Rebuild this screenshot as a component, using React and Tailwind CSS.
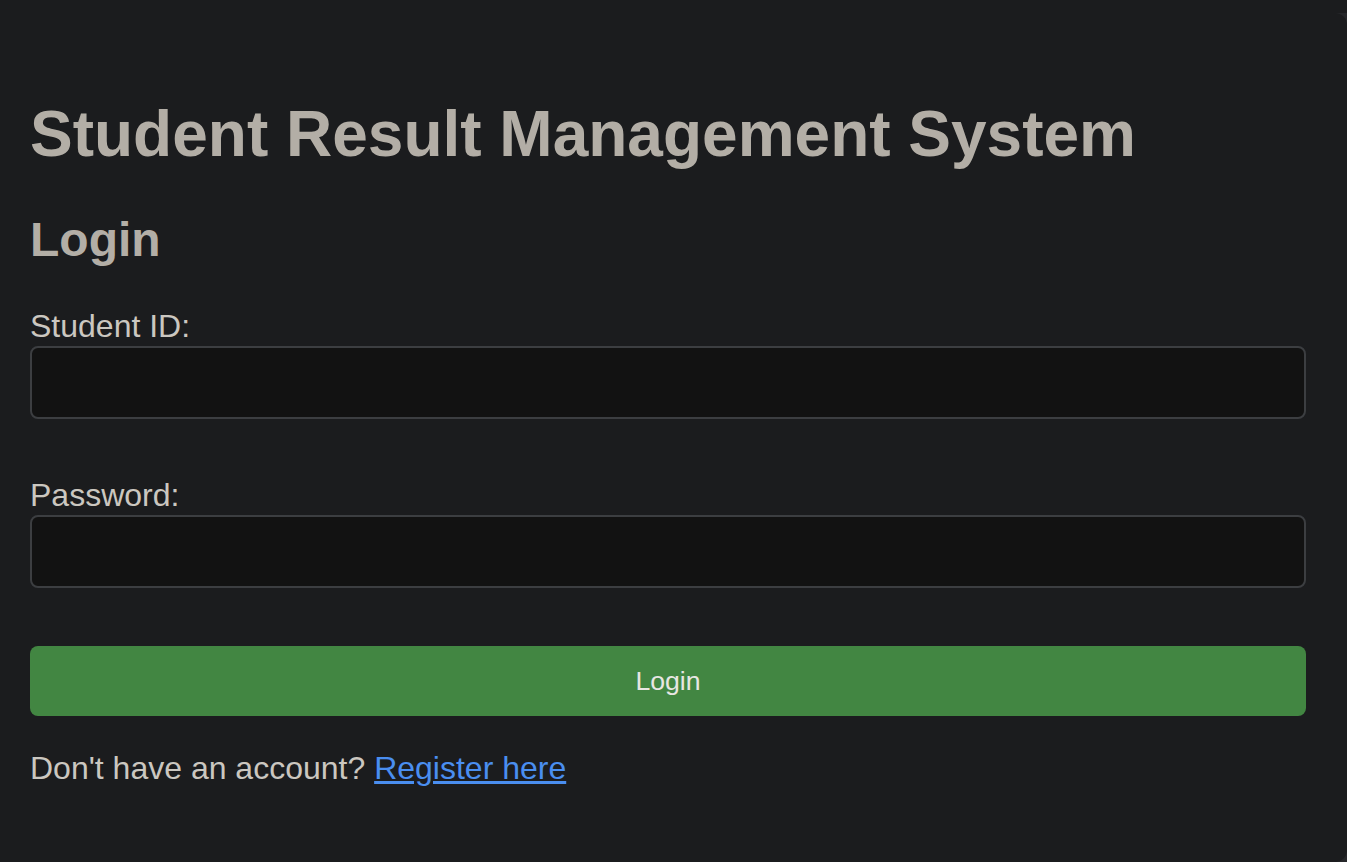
export default function App() {
  return (
    <div className="min-h-screen bg-[#1b1c1e] pt-[13px] overflow-hidden" style={{ fontFamily: '"Liberation Sans", Arial, sans-serif' }}>
      <div className="bg-[#26272a]">
        <div className="-ml-[20px] w-[1367px] h-[849px] rounded-[12px] bg-[#1b1c1e] pl-[50px] pr-[41px] pt-[85px]">
          <h1 className="text-[64px] leading-[72px] font-bold text-[#b3aea6]">
            Student Result Management System
          </h1>
          <h2 className="mt-[42px] text-[48px] leading-[56px] font-bold text-[#b3aea6]">Login</h2>

          <form className="mt-[40px]" onSubmit={(e) => e.preventDefault()}>
            <label className="block text-[32px] leading-[36px] text-[#cbc7c0]">Student ID:</label>
            <input
              type="text"
              className="mt-[2px] block w-full h-[73px] rounded-[8px] border-2 border-[#3c3e41] bg-[#121212] px-4 text-[26px] text-[#e8e6e3] outline-none"
            />

            <label className="mt-[58px] block text-[32px] leading-[36px] text-[#cbc7c0]">Password:</label>
            <input
              type="password"
              className="mt-[2px] block w-full h-[73px] rounded-[8px] border-2 border-[#3c3e41] bg-[#121212] px-4 text-[26px] text-[#e8e6e3] outline-none"
            />

            <button
              type="submit"
              className="mt-[58px] block w-full h-[70px] rounded-[8px] bg-[#428642] text-[26.67px] text-[#e8e6e3]"
            >
              Login
            </button>
          </form>

          <p className="mt-[34px] text-[32px] leading-[36px] text-[#cbc7c0]">
            Don't have an account?{" "}
            <a href="#" className="text-[#4a8ef0] underline">Register here</a>
          </p>
        </div>
      </div>
    </div>
  );
}
